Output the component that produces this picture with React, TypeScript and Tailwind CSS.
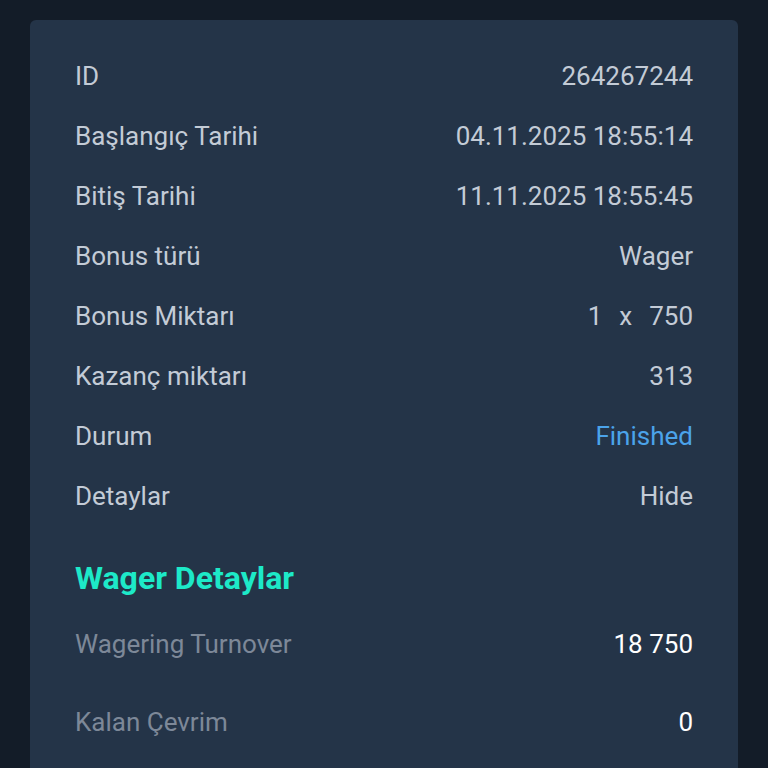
const rows: { label: string; value: React.ReactNode; tone?: string }[] = [
  { label: "ID", value: "264267244" },
  { label: "Başlangıç Tarihi", value: "04.11.2025 18:55:14" },
  { label: "Bitiş Tarihi", value: "11.11.2025 18:55:45" },
  { label: "Bonus türü", value: "Wager" },
  {
    label: "Bonus Miktarı",
    value: (
      <span className="flex gap-[17px]">
        <span>1</span>
        <span>x</span>
        <span>750</span>
      </span>
    ),
  },
  { label: "Kazanç miktarı", value: "313" },
  { label: "Durum", value: "Finished", tone: "text-[#4ba3ea]" },
  { label: "Detaylar", value: "Hide" },
];

export default function App() {
  return (
    <div className="min-h-[768px] h-[768px] overflow-hidden bg-[#131c28] px-[30px] pt-[20px] font-['Roboto',sans-serif]">
      <div className="h-[800px] rounded-md bg-[#243448] pl-[45px] pr-[45px] pt-[26px]">
        {rows.map((r) => (
          <div key={r.label} className="flex h-[60px] items-center justify-between text-[26px] text-[#c3cbd6]">
            <span>{r.label}</span>
            <span className={r.tone ?? ""}>{r.value}</span>
          </div>
        ))}

        <h2 className="mt-[34px] h-[36px] text-[32px] font-bold leading-[36px] text-[#1de9c8]">Wager Detaylar</h2>

        <div className="mt-[9px]">
          <div className="flex h-[78px] items-center justify-between text-[26px]">
            <span className="text-[#7d8898]">Wagering Turnover</span>
            <span className="text-white">18 750</span>
          </div>
          <div className="flex h-[78px] items-center justify-between text-[26px]">
            <span className="text-[#7d8898]">Kalan Çevrim</span>
            <span className="text-white">0</span>
          </div>
        </div>
      </div>
    </div>
  );
}
